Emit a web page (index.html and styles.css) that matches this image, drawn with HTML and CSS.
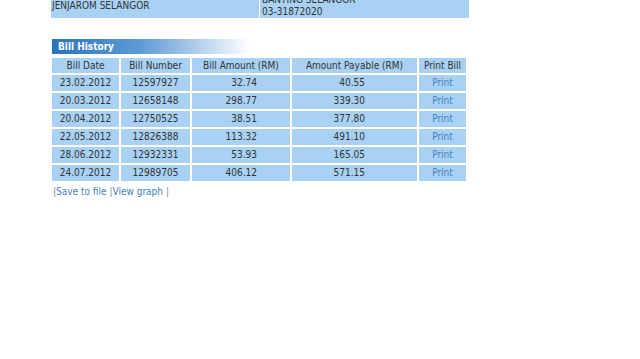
FILE: index.html
```html
<!DOCTYPE html>
<html>
<head>
<meta charset="utf-8">
<link rel="stylesheet" href="styles.css">
</head>
<body>
<div class="page">
  <table class="addr">
    <tr>
      <td class="addr-l">JENJAROM SELANGOR</td>
      <td class="addr-r">BANTING SELANGOR<br>03-31872020</td>
    </tr>
  </table>

  <div class="section-title">Bill History</div>

  <table class="bills">
    <tr class="head">
      <td class="c-date">Bill Date</td>
      <td class="c-num">Bill Number</td>
      <td class="c-amt h">Bill Amount (RM)</td>
      <td class="c-pay h">Amount Payable (RM)</td>
      <td class="c-print h">Print Bill</td>
    </tr>
    <tr><td class="c-date">23.02.2012</td><td class="c-num">12597927</td><td class="c-amt">32.74</td><td class="c-pay">40.55</td><td class="c-print"><a href="#">Print</a></td></tr>
    <tr><td class="c-date">20.03.2012</td><td class="c-num">12658148</td><td class="c-amt">298.77</td><td class="c-pay">339.30</td><td class="c-print"><a href="#">Print</a></td></tr>
    <tr><td class="c-date">20.04.2012</td><td class="c-num">12750525</td><td class="c-amt">38.51</td><td class="c-pay">377.80</td><td class="c-print"><a href="#">Print</a></td></tr>
    <tr><td class="c-date">22.05.2012</td><td class="c-num">12826388</td><td class="c-amt">113.32</td><td class="c-pay">491.10</td><td class="c-print"><a href="#">Print</a></td></tr>
    <tr><td class="c-date">28.06.2012</td><td class="c-num">12932331</td><td class="c-amt">53.93</td><td class="c-pay">165.05</td><td class="c-print"><a href="#">Print</a></td></tr>
    <tr><td class="c-date">24.07.2012</td><td class="c-num">12989705</td><td class="c-amt">406.12</td><td class="c-pay">571.15</td><td class="c-print"><a href="#">Print</a></td></tr>
  </table>

  <div class="actions"><span class="sep">|</span><a href="#">Save to file</a> <span class="sep">|</span><a href="#">View graph</a> <span class="sep">|</span></div>
</div>
</body>
</html>
```
FILE: styles.css
```css
html, body {
  margin: 0;
  padding: 0;
  background: #ffffff;
}
body {
  font-family: "DejaVu Sans Condensed", "DejaVu Sans", sans-serif;
  font-size: 10px;
  color: #333333;
}
.page {
  padding-left: 51px;
  width: 418px;
}
.addr {
  width: 418px;
  border-collapse: collapse;
  margin-top: -6px;
  background: #a8d1f4;
}
.addr td {
  vertical-align: bottom;
  padding: 0 0 0 2px;
  line-height: 12px;
}
.addr-l {
  width: 207px;
  border-right: 1px solid #ffffff;
  padding: 0 0 6px 1px !important;
}
.section-title {
  margin: 21px 0 3px 1px;
  width: 198px;
  height: 15px;
  line-height: 15px;
  padding-left: 6px;
  box-sizing: border-box;
  font-weight: bold;
  color: #ffffff;
  background: linear-gradient(to right, #2a74bd 0%, #5e9bd6 45%, #ffffff 100%);
}
.bills {
  width: 418px;
  border-collapse: separate;
  border-spacing: 2px;
  margin-left: -1px;
  margin-top: -1px;
}
.bills td {
  background: #a8d1f4;
  height: 16px;
  padding: 0;
  line-height: 16px;
  white-space: nowrap;
}
.c-date { width: 67px; text-align: center; }
.c-num { width: 69px; text-align: center; }
.c-amt { width: 98px; text-align: right; padding-right: 33px !important; box-sizing: border-box; }
.c-pay { width: 125px; text-align: right; padding-right: 52px !important; box-sizing: border-box; }
.c-print { text-align: center; }
.bills .head td { height: 15px; line-height: 15px; }
.bills td.h { text-align: center; padding-right: 0 !important; }
.bills a {
  color: #3d7fc6;
  text-decoration: none;
}
.actions {
  margin: 3px 0 0 2px;
  color: #888888;
}
.actions a {
  color: #3d7fc6;
  text-decoration: none;
}
```
